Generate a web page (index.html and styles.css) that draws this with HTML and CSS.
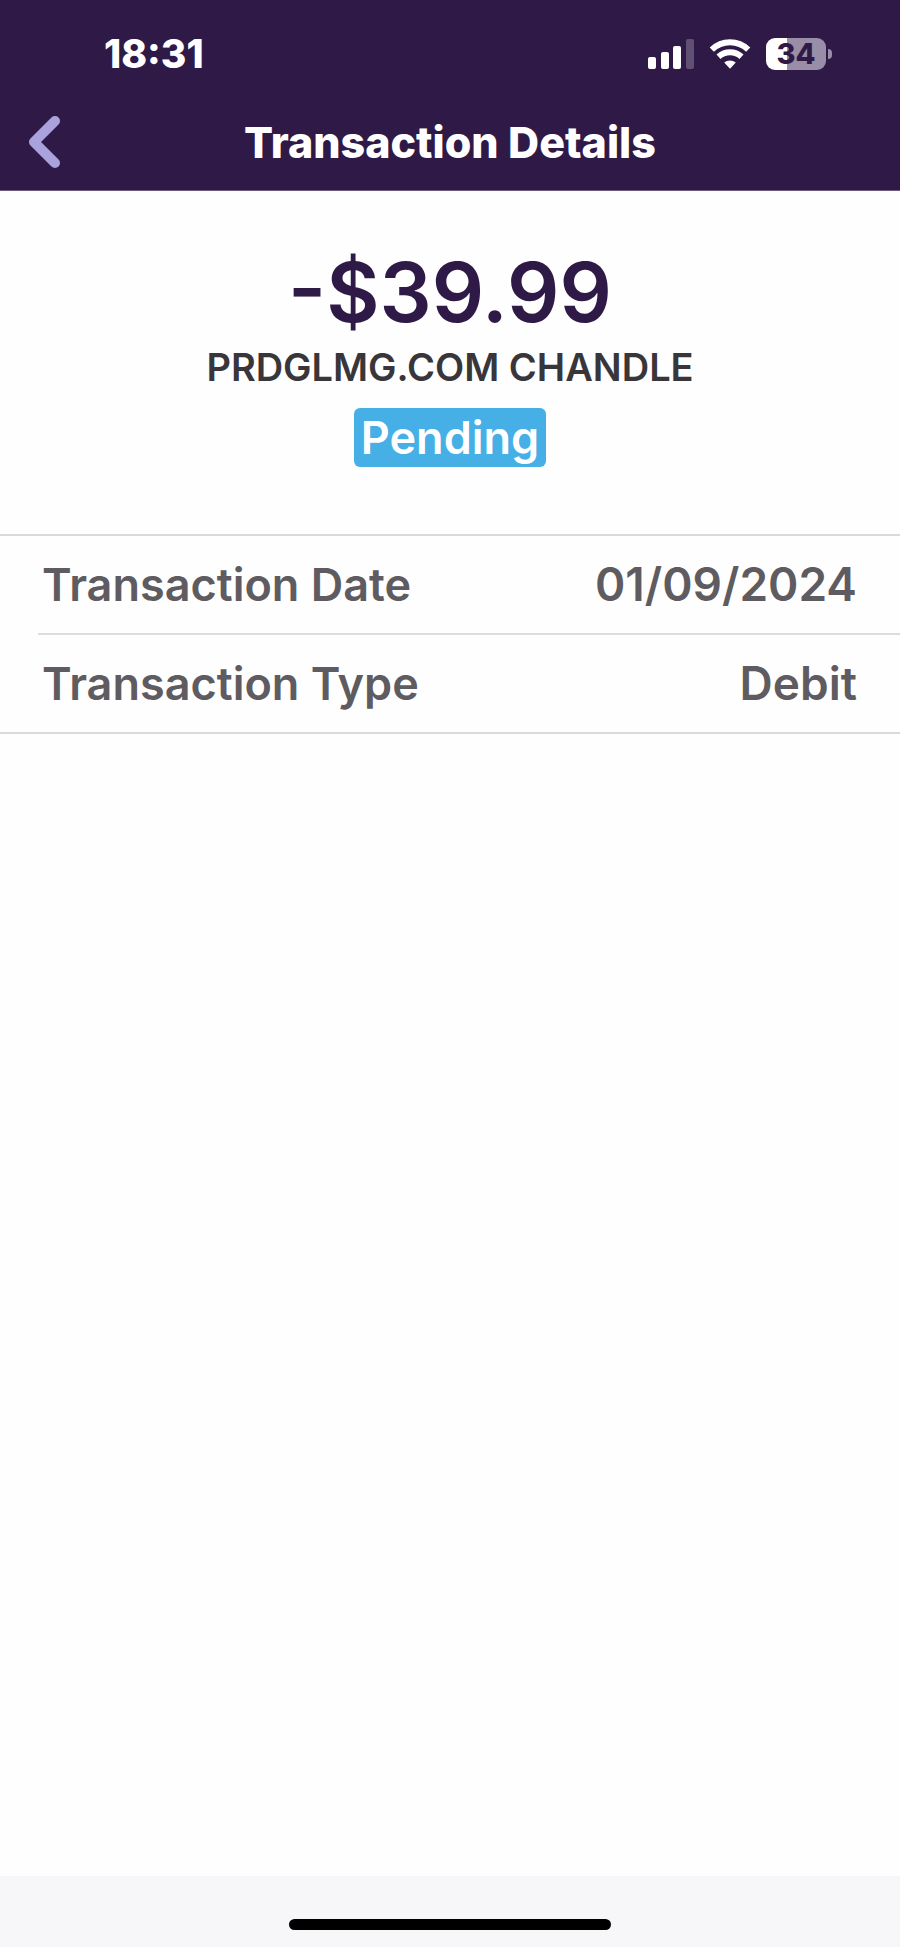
FILE: index.html
```html
<!DOCTYPE html>
<html lang="en">
<head>
<meta charset="utf-8">
<meta name="viewport" content="width=device-width, initial-scale=1">
<title>Transaction Details</title>
<link rel="stylesheet" href="styles.css">
</head>
<body>
<div class="screen">
  <header class="header">
    <div class="status">
      <time class="clock">18:31</time>
      <div class="indicators">
        <svg class="signal" width="46" height="30" viewBox="0 0 46 30" fill="#fff" aria-hidden="true">
          <rect x="0" y="18" width="8" height="12" rx="2"/>
          <rect x="13" y="13" width="8" height="17" rx="2"/>
          <rect x="25" y="7" width="8" height="23" rx="2"/>
          <rect x="38" y="0" width="8" height="30" rx="2" opacity=".24"/>
        </svg>
        <svg class="wifi" width="42" height="32" viewBox="0 0 42 32" fill="none" stroke="#fff" stroke-width="6" aria-hidden="true">
          <path d="M2.800 11.700C13 1.900 29 1.900 39.200 11.700"/>
          <path d="M9.500 18.700C16 12.800 26 12.800 32.500 18.700"/>
          <path d="M21 30.800l-5.800-6.200C18.600 21.800 23.400 21.800 26.800 24.600z" fill="#fff" stroke="none"/>
        </svg>
        <div class="battery"><span class="battery-body">34</span><span class="battery-tip"></span></div>
      </div>
    </div>
    <nav class="navbar">
      <button class="back" type="button" aria-label="Back">
        <svg width="32" height="52" viewBox="0 0 32 52" fill="none" stroke="#aaa2dc" stroke-width="10" stroke-linecap="round" stroke-linejoin="round" aria-hidden="true"><path d="M27 5L6 26l21 21"/></svg>
      </button>
      <h1 class="title">Transaction Details</h1>
    </nav>
  </header>
  <main class="content">
    <section class="summary">
      <p class="amount">-$39.99</p>
      <p class="merchant">PRDGLMG.COM CHANDLE</p>
      <span class="badge">Pending</span>
    </section>
    <dl class="details">
      <div class="row"><dt>Transaction Date</dt><dd>01/09/2024</dd></div>
      <div class="row"><dt>Transaction Type</dt><dd>Debit</dd></div>
    </dl>
  </main>
  <footer class="footer"><div class="home-bar"></div></footer>
</div>
</body>
</html>
```
FILE: styles.css
```css
* { box-sizing: border-box; }
body {
  margin: 0;
  background: #fefefe;
  font-family: Inter, "Liberation Sans", sans-serif;
}
h1, p, dl, dd { margin: 0; }
.screen {
  min-height: 100vh;
  display: flex;
  flex-direction: column;
}
.header {
  background: #2f1a47;
  color: #fff;
  border-bottom: 1px solid #6d5c80;
}
.status {
  display: flex;
  justify-content: space-between;
  align-items: center;
  padding: 30px 68px 0 104px;
}
.clock {
  font-size: 39px;
  line-height: 48px;
  font-weight: 800;
}
.indicators { display: flex; align-items: center; }
.signal { margin-right: 15px; }
.wifi { margin-right: 15px; }
.battery { display: flex; align-items: center; gap: 2px; }
.battery-body {
  width: 60px;
  border-radius: 9px;
  background: linear-gradient(to right, #fff 21px, #9a8da8 21px);
  color: #2f1a47;
  font-size: 29px;
  line-height: 32px;
  font-weight: 800;
  text-align: center;
}
.battery-tip {
  width: 4px;
  height: 10px;
  border-radius: 0 5px 5px 0;
  background: #9a8da8;
}
.navbar {
  display: grid;
  grid-template-columns: 60px 1fr 60px;
  align-items: center;
  padding: 26px 28px 10px;
}
.back {
  display: flex;
  justify-self: start;
  padding: 0;
  border: 0;
  background: none;
}
.title {
  font-size: 43px;
  line-height: 76px;
  font-weight: 800;
  text-align: center;
}
.content { flex: 1; }
.summary {
  display: flex;
  flex-direction: column;
  align-items: center;
  padding: 52px 16px 67px;
  text-align: center;
}
.amount {
  color: #2f1a47;
  font-size: 82px;
  line-height: 100px;
  font-weight: 600;
}
.merchant {
  color: #38363a;
  font-size: 38px;
  line-height: 48px;
  font-weight: 600;
}
.badge {
  margin-top: 17px;
  padding: 0 7px;
  border-radius: 6px;
  background: #45afe6;
  color: #fff;
  font-size: 45px;
  line-height: 59px;
  font-weight: 600;
}
.details {
  border-top: 2px solid #d9d8da;
  border-bottom: 2px solid #d9d8da;
}
.row {
  display: flex;
  justify-content: space-between;
  margin-left: 38px;
  padding: 0 43px 0 4px;
  color: #5e5c60;
  font-size: 45px;
  line-height: 97px;
  font-weight: 600;
}
.row dd { font-size: 46px; }
.row + .row { border-top: 2px solid #dddbdf; }
.footer {
  display: flex;
  justify-content: center;
  padding: 43px 0 17px;
  background: #f7f6f9;
}
.home-bar {
  width: 322px;
  height: 11px;
  border-radius: 6px;
  background: #000;
}
```
